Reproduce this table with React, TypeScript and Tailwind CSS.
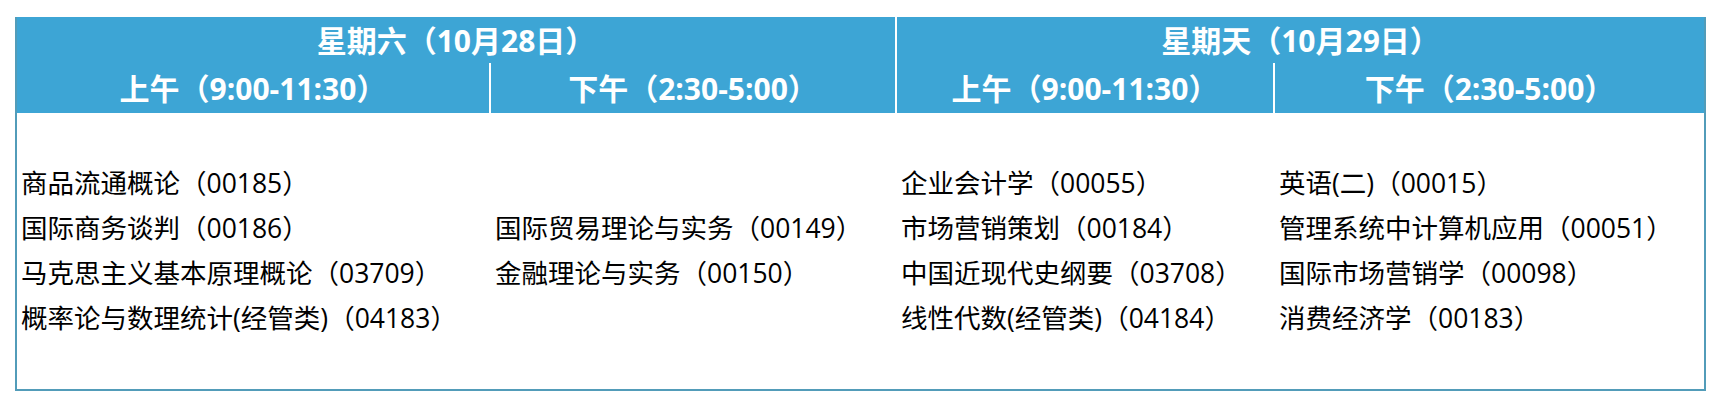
const days = [
  {
    title: '星期六（10月28日）',
    slots: [
      {
        label: '上午（9:00-11:30）',
        width: 'w-[472px]',
        items: ['商品流通概论（00185）', '国际商务谈判（00186）', '马克思主义基本原理概论（03709）', '概率论与数理统计(经管类)（04183）'],
      },
      {
        label: '下午（2:30-5:00）',
        width: 'w-[404px]',
        items: ['国际贸易理论与实务（00149）', '金融理论与实务（00150）'],
      },
    ],
  },
  {
    title: '星期天（10月29日）',
    slots: [
      {
        label: '上午（9:00-11:30）',
        width: 'w-[376px]',
        items: ['企业会计学（00055）', '市场营销策划（00184）', '中国近现代史纲要（03708）', '线性代数(经管类)（04184）'],
      },
      {
        label: '下午（2:30-5:00）',
        width: 'w-[429px]',
        items: ['英语(二)（00015）', '管理系统中计算机应用（00051）', '国际市场营销学（00098）', '消费经济学（00183）'],
      },
    ],
  },
]

export default function App() {
  return (
    <div
      className="bg-white w-[1722px] h-[408px] pt-[17px] pl-[15px]"
      style={{ fontFamily: '"Open Sans", "Noto Sans CJK SC", sans-serif' }}
    >
      <div className="w-[1691px] flex gap-[2px] bg-white border-l-2 border-r-2 border-b-2 border-[#529cb9]">
        {days.map((day) => (
          <div key={day.title} className="flex flex-col">
            {/* day title */}
            <div className="h-[46px] bg-[#3da5d5] flex items-center justify-center text-white font-bold text-[30px]">
              {day.title}
            </div>
            <div className="flex gap-[2px]">
              {day.slots.map((slot) => (
                <div key={slot.label} className={`${slot.width} flex flex-col`}>
                  <div className="h-[50px] bg-[#3da5d5] flex items-center justify-center text-white font-bold text-[30px]">
                    {slot.label}
                  </div>
                  <div className="h-[276px] flex flex-col justify-center pl-[4px] text-[26.5px] leading-[45px] text-black whitespace-nowrap">
                    {slot.items.map((item) => (
                      <div key={item}>{item}</div>
                    ))}
                  </div>
                </div>
              ))}
            </div>
          </div>
        ))}
      </div>
    </div>
  )
}
